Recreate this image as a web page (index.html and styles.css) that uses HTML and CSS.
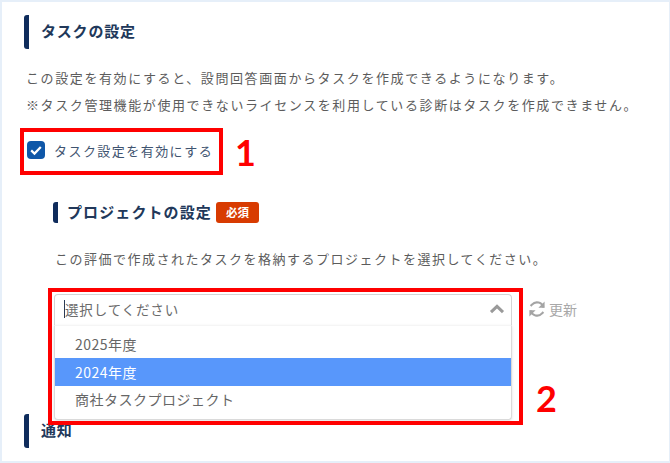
FILE: index.html
```html
<!DOCTYPE html>
<html lang="ja">
<head>
<meta charset="utf-8">
<title>タスクの設定</title>
<link rel="stylesheet" href="styles.css">
</head>
<body>
<main class="page">
  <section class="section">
    <h2 class="heading">タスクの設定</h2>
    <p class="desc desc-first">この設定を有効にすると、設問回答画面からタスクを作成できるようになります。</p>
    <p class="desc">※タスク管理機能が使用できないライセンスを利用している診断はタスクを作成できません。</p>
    <label class="check-row">
      <span class="checkbox">
        <svg viewBox="0 0 18 18" width="18" height="18"><path d="M4.2 9.4l3.3 3.2 6.3-6.6" fill="none" stroke="#fff" stroke-width="2.2"/></svg>
      </span>
      <span class="check-label">タスク設定を有効にする</span>
    </label>
    <div class="sub">
      <div class="sub-head">
        <h3 class="sub-title">プロジェクトの設定</h3>
        <span class="badge">必須</span>
      </div>
      <p class="desc sub-desc">この評価で作成されたタスクを格納するプロジェクトを選択してください。</p>
      <div class="select-row">
        <div class="select">
          <div class="select-input">
            <span class="caret"></span><span class="placeholder">選択してください</span>
            <svg class="chevron" viewBox="0 0 16 10" width="16" height="10"><path d="M2 8.2L8 2.4l6 5.8" fill="none" stroke="#9a9a9a" stroke-width="3"/></svg>
          </div>
          <ul class="menu">
            <li class="option">2025年度</li>
            <li class="option option-active">2024年度</li>
            <li class="option">商社タスクプロジェクト</li>
          </ul>
        </div>
        <button class="refresh" type="button">
          <svg viewBox="0 0 18 18" width="18" height="18"><path d="M15.4 7.6A6.6 6.6 0 0 0 4 4.6L2.6 6M2.6 10.4a6.6 6.6 0 0 0 11.4 3L15.4 12" fill="none" stroke="#a4a4a4" stroke-width="2.1"/><path d="M16.6 1.6v6.2h-6.2zM1.4 16.4v-6.2h6.2z" fill="#a4a4a4"/></svg>
          <span>更新</span>
        </button>
      </div>
    </div>
    <h2 class="heading heading-next">通知</h2>
  </section>
  <div class="mark mark-one"></div>
  <div class="mark-num num-one">1</div>
  <div class="mark mark-two"></div>
  <div class="mark-num num-two">2</div>
</main>
</body>
</html>
```
FILE: styles.css
```css
* { box-sizing: border-box; }
html, body { margin: 0; padding: 0; background: #fff; }
body { font-family: "Noto Sans CJK JP", "Noto Sans", sans-serif; }
.page {
  position: relative;
  width: 670px;
  height: 463px;
  overflow: hidden;
  border: 2px solid #e6eff9;
  border-right-width: 1px;
}
.section { padding: 13px 0 0 22px; }
.heading {
  display: flex;
  align-items: center;
  height: 34px;
  margin: 0;
  padding: 0 0 3px 12px;
  border-left: 5px solid #0f2c5c;
  border-radius: 3px;
  font-size: 15px;
  font-weight: 700;
  color: #21385a;
  letter-spacing: 0.8px;
}
.desc {
  margin: 0;
  height: 27px;
  line-height: 27px;
  font-size: 13px;
  letter-spacing: 1.6px;
  color: #5c5c5c;
  white-space: nowrap;
}
.desc-first { margin-top: 15px; padding-left: 2px; }
.desc-first + .desc { padding-left: 2px; }
.check-row { display: flex; align-items: center; gap: 9px; margin: 20px 0 0 3px; height: 24px; }
.checkbox {
  display: flex;
  width: 18px;
  height: 18px;
  border-radius: 4px;
  background: #0f57a8;
}
.check-label { font-size: 13px; letter-spacing: 1.45px; color: #3f5470; }
.sub { margin: 40px 0 0 30px; }
.sub-head { display: flex; align-items: center; gap: 4px; height: 21px; }
.sub-title {
  margin: 0 0 0 -1px;
  padding-left: 9px;
  border-left: 5px solid #0f2c5c;
  border-radius: 3px;
  height: 21px;
  line-height: 19px;
  font-size: 15px;
  font-weight: 700;
  letter-spacing: 1.1px;
  color: #21385a;
}
.badge {
  padding: 0 10px;
  height: 21px;
  line-height: 20px;
  border-radius: 3px;
  background: #d83b01;
  color: #fff;
  font-size: 11.5px;
  font-weight: 700;
}
.sub-desc { margin-top: 22px; padding-left: 1px; letter-spacing: 1.5px; }
.select-row { position: relative; display: flex; align-items: center; gap: 17px; margin-top: 22px; height: 31px; }
.select { position: relative; width: 458px; height: 31px; }
.select-input {
  display: flex;
  align-items: center;
  height: 32px;
  padding: 0 6px 2px 9px;
  border: 1px solid #d4d4d4;
  border-bottom-color: #f5f5f5;
  border-radius: 4px 4px 0 0;
  background: #fff;
}
.caret { width: 1px; height: 18px; background: #2a3a55; }
.placeholder { flex: 1; font-size: 13.5px; letter-spacing: 0.85px; color: #6a6a6a; }
.menu {
  position: absolute;
  top: 31px;
  left: 0;
  right: 0;
  margin: 0;
  padding: 5px 0 0;
  height: 95px;
  list-style: none;
  background: #fff;
  border: 1px solid #dadada;
  border-top-color: #f5f5f5;
  border-radius: 0 0 4px 4px;
  box-shadow: 0 1px 3px rgba(0,0,0,.12);
  z-index: 2;
}
.option {
  display: flex;
  align-items: center;
  height: 27px;
  padding: 0 0 1px 20px;
  font-size: 14px;
  letter-spacing: 0.5px;
  color: #666;
}
.option-active { height: 28px; background: #5897fb; color: #fff; }
.refresh {
  display: flex;
  align-items: center;
  gap: 3px;
  padding: 0 0 1px;
  margin-left: -1px;
  border: 0;
  background: none;
  font: inherit;
  font-size: 14px;
  color: #a8a8a8;
}
.heading-next { margin-top: 89px; }
.mark { position: absolute; border: 4px solid #f00; z-index: 3; }
.mark-one { left: 18px; top: 126px; width: 203px; height: 47px; }
.mark-two { left: 46px; top: 286px; width: 475px; height: 137px; }
.mark-num {
  position: absolute;
  z-index: 3;
  font-family: "Lato", sans-serif;
  font-weight: 700;
  font-size: 36px;
  line-height: 36px;
  color: #f00;
}
.num-one { left: 233px; top: 132px; }
.num-two { left: 534px; top: 378px; }
```
